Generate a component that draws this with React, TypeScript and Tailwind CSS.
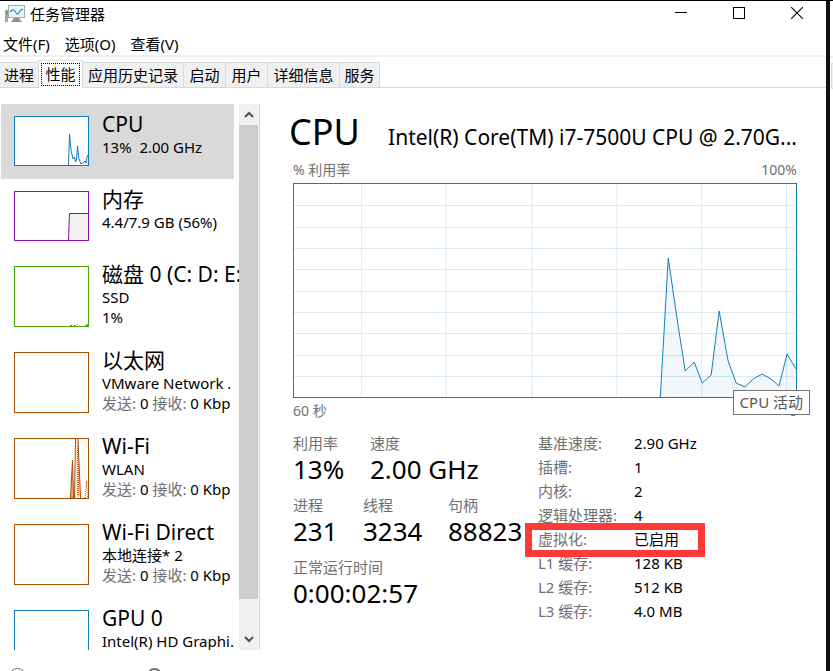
import { ReactNode } from "react";
import clsx from "clsx";

const MENUS = ["文件(F)", "选项(O)", "查看(V)"];

const TABS = [
  { label: "进程", width: "w-[38px]" },
  { label: "性能", width: "w-[45px]" },
  { label: "应用历史记录", width: "w-[101px]" },
  { label: "启动", width: "w-[42px]" },
  { label: "用户", width: "w-[42px]" },
  { label: "详细信息", width: "w-[72px]" },
  { label: "服务", width: "w-[40px]" },
];

const CPU_LINE =
  "367,214 375,74 384,136 392,187 401,178 409,199 418,191 426,127 435,177 443,199 452,203 460,195 469,190 478,195 486,202 494,170 503,185";

type Resource = {
  name: string;
  detail: ReactNode;
  extra?: ReactNode;
  color: string;
  tall?: boolean;
  graph?: ReactNode;
};

const Traffic = () => (
  <>
    <span className="text-[#707070]">发送:</span> 0 <span className="text-[#707070]">接收:</span> 0 Kbp
  </>
);

const RESOURCES: Resource[] = [
  {
    name: "CPU",
    detail: "13%\u00a0 2.00 GHz",
    color: "border-[#117dbb]",
    graph: (
      <svg viewBox="0 0 73 48" className="block h-full w-full">
        <path
          d="M53.5 48 L54.5 17 L56 33 L58 42 L59.5 40 L60.5 45 L61.5 43 L62.5 29 L64 42 L66 47 L68 46 L70 44 L71 46 L72.5 38"
          fill="none"
          stroke="#117dbb"
        />
      </svg>
    ),
  },
  {
    name: "内存",
    detail: "4.4/7.9 GB (56%)",
    color: "border-[#8b12ae]",
    graph: (
      <svg viewBox="0 0 73 48" className="block h-full w-full">
        <path d="M53.5 48 L54.5 21.5 H73 V48 Z" fill="#f4f2f4" />
        <path d="M53.5 48 L54.5 21.5 H73" fill="none" stroke="#8b12ae" />
      </svg>
    ),
  },
  {
    name: "磁盘 0 (C: D: E:",
    detail: "SSD",
    extra: "1%",
    color: "border-[#4da60c]",
    tall: true,
    graph: (
      <svg viewBox="0 0 73 59" className="block h-full w-full">
        <path d="M55 58.5 H57 M59 58.5 H61 M62 57.5 H63 M70 58.5 H73 M72 57.5 H73" stroke="#4da60c" />
      </svg>
    ),
  },
  { name: "以太网", detail: "VMware Network .", extra: <Traffic />, color: "border-[#a74f01]", tall: true },
  {
    name: "Wi-Fi",
    detail: "WLAN",
    extra: <Traffic />,
    color: "border-[#a74f01]",
    tall: true,
    graph: (
      <svg viewBox="0 0 73 59" className="block h-full w-full">
        <path d="M60 59 L61 0 H63 L66 59 Z" fill="#fbe8dc" />
        <path d="M55.5 59 L57.5 21 L58.5 59 Z" fill="#e5b48f" stroke="#a74f01" />
        <path d="M59.5 59 L60.5 0 M63 0 L65.5 59" fill="none" stroke="#a74f01" />
        <path d="M62.5 56 V6 M63.5 56 V20 M70 59 L71.5 42 L72.5 59" fill="none" stroke="#d0541c" strokeDasharray="1 1" />
      </svg>
    ),
  },
  { name: "Wi-Fi Direct", detail: "本地连接* 2", extra: <Traffic />, color: "border-[#a74f01]", tall: true },
  { name: "GPU 0", detail: "Intel(R) HD Graphi.", color: "border-[#117dbb]", tall: true },
];

const SPECS = [
  ["基准速度:", "2.90 GHz"],
  ["插槽:", "1"],
  ["内核:", "2"],
  ["逻辑处理器:", "4"],
  ["虚拟化:", "已启用"],
  ["L1 缓存:", "128 KB"],
  ["L2 缓存:", "512 KB"],
  ["L3 缓存:", "4.0 MB"],
];

const AppIcon = () => (
  <svg width="20" height="17" viewBox="0 0 20 17">
    <rect x="0" y="5" width="3" height="12" fill="#a8a8a8" />
    <rect x="1" y="6" width="2" height="3" fill="#35c435" />
    <path d="M9 13h5l3 4H6z" fill="#8f9498" />
    <rect x="3.5" y="0.5" width="16" height="12" fill="#eaf6fd" stroke="#a4a9ad" />
    <path d="M5 7 L7 5 L9 5 L12 9 L13 9 L16 5 L18 4" fill="none" stroke="#1d86bd" strokeWidth="1.2" />
  </svg>
);

const TitleBar = () => (
  <header className="flex h-7 items-start justify-between">
    <div className="flex h-[25px] items-center gap-[5px] pl-[5px]">
      <AppIcon />
      <h1 className="text-[15px] leading-5">任务管理器</h1>
    </div>
    <div className="flex h-6">
      <button aria-label="最小化" className="flex w-[58px] items-center justify-center">
        <svg width="12" height="12" viewBox="0 0 12 12">
          <path d="M0 5.5h12" stroke="#000" />
        </svg>
      </button>
      <button aria-label="最大化" className="flex w-[58px] items-center justify-center">
        <svg width="12" height="12" viewBox="0 0 12 12">
          <rect x="0.5" y="0.5" width="11" height="11" fill="none" stroke="#000" />
        </svg>
      </button>
      <button aria-label="关闭" className="flex w-[58px] items-center justify-center">
        <svg width="12" height="12" viewBox="0 0 12 12">
          <path d="M0 0l12 12M12 0L0 12" stroke="#000" strokeWidth="1.1" />
        </svg>
      </button>
    </div>
  </header>
);

const Tabs = () => (
  <div role="tablist" className="flex h-7 items-end border-b border-[#d9d9d9] text-[15px] leading-5">
    {TABS.map((tab, i) => (
      <button
        key={tab.label}
        role="tab"
        aria-selected={i === 1}
        className={clsx(
          "shrink-0 whitespace-nowrap border-[#d9d9d9]",
          tab.width,
          i === 1 ? "-mb-px h-7 border-x border-t bg-white p-[2px]" : "h-[25px] border-t bg-[#f0f0f0]",
          i > 1 && "border-r"
        )}
      >
        {i === 1 ? (
          <span className="flex h-[23px] items-center justify-center border border-dotted border-black pb-[2px]">
            {tab.label}
          </span>
        ) : (
          tab.label
        )}
      </button>
    ))}
  </div>
);

const ResourceItem = ({ item, selected }: { item: Resource; selected: boolean }) => (
  <button
    className={clsx(
      "flex w-[233px] shrink-0 items-start pl-[13px] text-left",
      item.tall ? "h-[86px]" : "h-[75px]",
      selected && "bg-[#d9d9d9]"
    )}
  >
    <span className={clsx("mt-3 block w-[75px] shrink-0 border bg-white", item.tall ? "h-[61px]" : "h-[50px]", item.color)}>
      {item.graph}
    </span>
    <span className="block whitespace-nowrap pl-[13px] pt-[7px] text-[15px] leading-5">
      <span className="block text-[21px] leading-[26px]">{item.name}</span>
      <span className="block">{item.detail}</span>
      {item.extra && <span className="block">{item.extra}</span>}
    </span>
  </button>
);

const Chevron = ({ down }: { down?: boolean }) => (
  <svg width="10" height="7" viewBox="0 0 10 7">
    <path d={down ? "M1 1l4 4 4-4" : "M1 6l4-4 4 4"} fill="none" stroke="#505050" strokeWidth="2" />
  </svg>
);

const Sidebar = () => (
  <aside className="flex w-[260px] shrink-0 pl-px">
    <div className="flex w-[238px] flex-col overflow-hidden">
      {RESOURCES.map((item, i) => (
        <ResourceItem key={item.name} item={item} selected={i === 0} />
      ))}
    </div>
    <div className="flex w-[21px] flex-col border-r border-[#dcdcdc] bg-[#f0f0f0]">
      <button aria-label="向上滚动" className="flex h-[21px] items-center justify-center">
        <Chevron />
      </button>
      <div className="mr-px flex-1 bg-[#cdcdcd]" />
      <div className="h-[30px]" />
      <button aria-label="向下滚动" className="flex h-[21px] items-center justify-center">
        <Chevron down />
      </button>
    </div>
  </aside>
);

const CpuChart = () => (
  <div className="relative">
    <div className="h-[215px] border border-[#117dbb]">
      <svg viewBox="0 0 503 213" preserveAspectRatio="none" className="block h-full w-full">
        {[21, 43, 64, 85, 107, 128, 149, 171, 192].map((y) => (
          <path key={y} d={`M0 ${y + 0.5}H501`} stroke="#d9eaf4" />
        ))}
        {[67, 152, 238, 323, 408, 493].map((x) => (
          <path key={x} d={`M${x + 0.5} 0V213`} stroke="#d9eaf4" />
        ))}
        <polygon points={`${CPU_LINE} 503,214`} fill="#117dbb" fillOpacity="0.06" />
        <polyline points={CPU_LINE} fill="none" stroke="#117dbb" />
      </svg>
    </div>
    <div
      role="tooltip"
      className="absolute top-[207px] -right-[13px] z-10 whitespace-nowrap border border-[#767676] bg-white px-[6px] text-[15px] leading-[23px] text-[#575757]"
    >
      CPU 活动
    </div>
  </div>
);

const Stat = ({ label, value, className }: { label: string; value: string; className?: string }) => (
  <div className={clsx("h-[62px] shrink-0 whitespace-nowrap", className)}>
    <dt className="text-[15px] leading-5 text-[#707070]">{label}</dt>
    <dd className="text-[26px] leading-8">{value}</dd>
  </div>
);

const Details = () => (
  <div className="flex pt-[10px]">
    <dl className="w-[245px] shrink-0 pt-[2px]">
      <div className="flex">
        <Stat label="利用率" value="13%" className="w-[77px]" />
        <Stat label="速度" value="2.00 GHz" />
      </div>
      <div className="flex">
        <Stat label="进程" value="231" className="w-[70px]" />
        <Stat label="线程" value="3234" className="w-[85px]" />
        <Stat label="句柄" value="88823" />
      </div>
      <Stat label="正常运行时间" value="0:00:02:57" />
    </dl>
    <div className="relative">
      <table className="text-[15px] leading-6">
        <tbody>
          {SPECS.map(([label, value]) => (
            <tr key={label}>
              <th scope="row" className="w-24 p-0 text-left font-normal whitespace-nowrap text-[#707070]">
                {label}
              </th>
              <td className="p-0 whitespace-nowrap">{value}</td>
            </tr>
          ))}
        </tbody>
      </table>
      {/* highlight around the virtualization row */}
      <div className="absolute top-[92px] -left-[13px] h-[34px] w-[180px] border-[7px] border-[#fc3a3a]" />
    </div>
  </div>
);

const CpuPanel = () => (
  <main className="min-w-0 flex-1 pr-[29px] pl-[29px]">
    <div className="flex items-baseline gap-6">
      <h2 className="text-4xl leading-[56px]">CPU</h2>
      <p className="min-w-0 flex-1 truncate text-right text-[21px] leading-7">Intel(R) Core(TM) i7-7500U CPU @ 2.70G...</p>
    </div>
    <div className="pl-1">
      <div className="flex h-[23px] justify-between text-sm leading-5 text-[#707070]">
        <span>% 利用率</span>
        <span>100%</span>
      </div>
      <CpuChart />
      <div className="flex justify-between pt-[3px] text-sm leading-5 text-[#707070]">
        <span>60 秒</span>
        <span>0</span>
      </div>
      <Details />
    </div>
  </main>
);

const Footer = () => (
  <footer className="flex h-[21px] shrink-0 items-start gap-[121px] overflow-hidden pt-[18px] pl-[9px]">
    <button aria-label="简略信息" className="size-[17px] shrink-0 rounded-full border border-[#707070]" />
    <button aria-label="打开资源监视器" className="size-[15px] shrink-0 rounded-full border-2 border-[#707070]" />
  </footer>
);

export default function App() {
  return (
    <div className="flex h-screen overflow-hidden border-t border-black bg-white font-['Noto_Sans','Noto_Sans_CJK_SC',sans-serif] text-black">
      <div className="flex min-w-0 flex-1 flex-col">
        <TitleBar />
        <nav className="flex h-[26px] items-center gap-[15px] pt-1 pl-[3px] text-[15px] leading-5">
          {MENUS.map((menu) => (
            <button key={menu}>{menu}</button>
          ))}
        </nav>
        <div className="mb-[3px] h-[2px] shrink-0 bg-[#f0f0f0]" />
        <Tabs />
        <div className="flex min-h-0 flex-1 pt-4">
          <Sidebar />
          <CpuPanel />
        </div>
        <Footer />
      </div>
      <div className="w-1 shrink-0 bg-[#111]" />
      <div className="w-[3px] shrink-0 pt-[55px]">
        <div className="mb-[5px] h-[2px] bg-[#f0f0f0]" />
        <div className="ml-px h-[26px] border border-r-0 border-[#d9d9d9] bg-[#f0f0f0]" />
      </div>
    </div>
  );
}
